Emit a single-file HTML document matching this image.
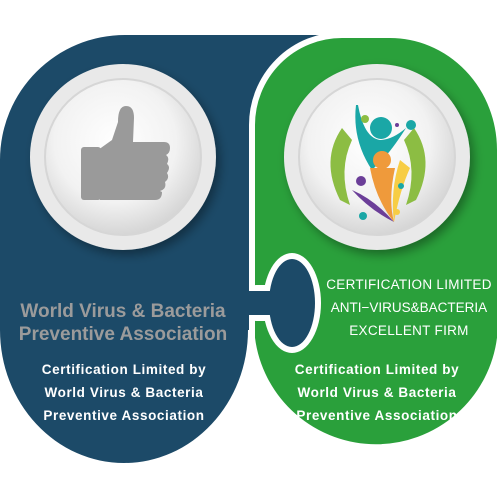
<!DOCTYPE html>
<html><head><meta charset="utf-8"><style>
html,body{margin:0;padding:0;background:#fff;width:500px;height:500px;overflow:hidden}
svg{display:block}
text{font-family:"Liberation Sans",sans-serif;font-weight:bold;text-anchor:middle}
</style></head><body>
<svg width="500" height="500" viewBox="0 0 500 500" xmlns="http://www.w3.org/2000/svg">
<defs>
<radialGradient id="g1" cx="0.45" cy="0.4" r="0.65">
<stop offset="0" stop-color="#ffffff"/><stop offset="0.6" stop-color="#f2f2f2"/><stop offset="1" stop-color="#cfcfcf"/>
</radialGradient>
<filter id="sh" x="-20%" y="-20%" width="150%" height="150%"><feDropShadow dx="4" dy="5" stdDeviation="5" flood-color="#000" flood-opacity="0.35"/></filter>
</defs>
<!-- blue -->
<path d="M0,160 A125,125 0 0 1 125,35 L380,35 L380,330 L248,330 A124,133 0 0 1 0,330 Z" fill="#1c4a68"/>
<!-- green -->
<path d="M252,125 A90,90 0 0 1 342,35 L390,35 A110,115 0 0 1 500,150 L500,338 A125,125 0 0 1 252,338 Z" fill="#2aa03b" stroke="#fff" stroke-width="6"/>
<!-- puzzle knob -->
<rect x="246" y="285" width="40" height="36" rx="10" fill="#fff"/>
<ellipse cx="292" cy="303" rx="29" ry="50" fill="#fff"/>
<rect x="240" y="291" width="40" height="24" fill="#1c4a68"/>
<ellipse cx="292" cy="303" rx="23" ry="44" fill="#1c4a68"/>
<rect x="240" y="282" width="9" height="42" fill="#1c4a68"/>
<!-- circles -->
<g filter="url(#sh)">
<circle cx="123" cy="157" r="93" fill="#e9e9e9"/>
<circle cx="377" cy="157" r="93" fill="#e9e9e9"/>
</g>
<circle cx="123" cy="157" r="78" fill="url(#g1)" stroke="#d6d6d6" stroke-width="2"/>
<circle cx="377" cy="157" r="78" fill="url(#g1)" stroke="#d6d6d6" stroke-width="2"/>
<!-- thumbs up -->
<g fill="#9a9a9a">
<rect x="81" y="147" width="20" height="53" rx="3"/>
<path d="M98,150 L112,140 L118,122 Q118,106 126,106 Q134,106 134,118 L133,142 L164,142 Q170,142 170,148 Q170,153 166,155 Q170,158 167,164 Q171,167 167,173 Q170,178 165,182 Q167,189 160,191 L162,192 Q162,200 155,200 L100,200 Z"/>
</g>
<!-- logo -->
<path d="M342,128 Q320,160 340,200 L350,205 Q338,170 352,140 Z" fill="#8cbd43"/>
<path d="M414,128 Q436,160 416,200 L406,205 Q418,170 404,140 Z" fill="#8cbd43"/>
<path d="M356,105 Q352,140 372,170 L382,160 Q392,150 406,128 Q392,140 380,140 Q364,138 358,105 Z" fill="#1aa7a6"/>
<circle cx="381" cy="128" r="11" fill="#1aa7a6"/>
<circle cx="365" cy="119" r="4" fill="#8cbd43"/>
<circle cx="411" cy="125" r="5" fill="#1aa7a6"/>
<circle cx="397" cy="125" r="2" fill="#6b3e98"/>
<circle cx="382" cy="160" r="9" fill="#ef9a3b"/>
<path d="M370,168 L395,168 Q388,200 394,222 Q376,200 370,168Z" fill="#ef9a3b"/>
<path d="M400,160 Q390,190 394,222 Q400,190 410,168Z" fill="#f7cd45"/>
<path d="M352,190 Q375,200 394,222 Q370,210 352,190Z" fill="#6b3e98"/>
<circle cx="361" cy="181" r="5" fill="#6b3e98"/>
<circle cx="363" cy="216" r="4" fill="#1aa7a6"/>
<circle cx="397" cy="212" r="3" fill="#f7cd45"/>
<circle cx="401" cy="186" r="3" fill="#1aa7a6"/>
<!-- left text -->
<text x="123" y="317" font-size="19" fill="#9b9b9b">World Virus &amp; Bacteria</text>
<text x="123" y="340" font-size="19" fill="#9b9b9b">Preventive Association</text>
<text x="124" y="374" font-size="13.5" fill="#fff" letter-spacing="0.6">Certification Limited by</text>
<text x="124" y="397" font-size="13.5" fill="#fff" letter-spacing="0.6">World Virus &amp; Bacteria</text>
<text x="124" y="420" font-size="13.5" fill="#fff" letter-spacing="0.6">Preventive Association</text>
<!-- right text -->
<text x="409" y="289" font-size="13.5" fill="#fff" style="font-weight:normal" letter-spacing="0.3">CERTIFICATION LIMITED</text>
<text x="409" y="312" font-size="13.5" fill="#fff" style="font-weight:normal">ANTI−VIRUS&amp;BACTERIA</text>
<text x="409" y="335" font-size="13.5" fill="#fff" style="font-weight:normal" letter-spacing="0.3">EXCELLENT FIRM</text>
<text x="377" y="374" font-size="13.5" fill="#fff" letter-spacing="0.6">Certification Limited by</text>
<text x="377" y="397" font-size="13.5" fill="#fff" letter-spacing="0.6">World Virus &amp; Bacteria</text>
<text x="377" y="420" font-size="13.5" fill="#fff" letter-spacing="0.6">Preventive Association</text>
</svg>
</body></html>
